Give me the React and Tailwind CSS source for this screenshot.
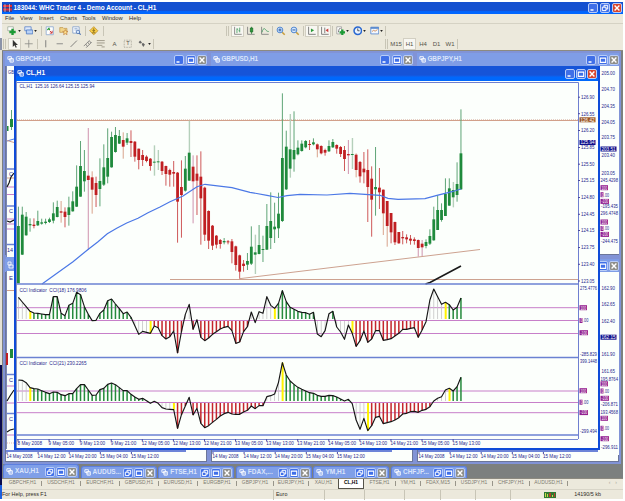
import React from "react";

/* ---------- market data: [high, low, open/close top, open/close bottom, kind] ---------- */
// kinds: g = up, r = down, G / R = up / down with a pale wick
const CANDLES = `350 580 408 580 g;350 495 374 494 g;366 437 380 436 g;385 425 402 406 g;385 415 404 408 r;362 408 393 406 g;386 404 397 401 g;386 403 395 399 g;383 399 388 396 g;337 400 370 392 g;332 382 351 381 g;333 398 364 368 R;352 412 365 381 r;320 407 352 375 g;304 365 334 364 g;226 351 290 350 g;153 320 228 320 g;180 305 243 274 g;114 480 257 270 P;244 371 262 299 R;260 351 279 315 r;205 349 273 297 g;163 288 232 284 g;115 280 204 260 g;125 233 141 232 g;111 188 135 186 g;120 162 138 161 g;127 206 150 170 R;129 165 145 158 g;121 201 153 159 r;153 215 155 200 r;176 238 176 210 r;180 228 195 210 r;196 217 200 213 r;204 242 206 228 r;166 257 215 218 G;180 240 214 217 G;213 255 215 243 r;227 287 228 252 r;236 290 240 254 r;213 290 246 251 r;246 458 248 335 r;211 443 291 315 r;198 305 236 302 g;92 273 188 272 G;196 400 230 274 P;196 375 251 272 r;184 464 260 325 r;290 453 293 434 r;361 477 363 452 r;405 480 407 467 r;435 475 437 464 r;447 476 450 462 r;444 463 453 457 g;450 463 454 457 r;447 520 454 486 r;467 542 469 525 r;494 566 496 545 r;510 545 521 528 r;489 540 513 524 g;409 525 470 521 g;434 552 487 494 G;405 493 465 492 g;437 516 477 480 g;342 480 408 479 g;307 477 393 444 g;338 459 410 418 g;308 444 371 415 g;10 396 204 393 g;122 300 170 298 g;72 263 178 236 G;64 245 180 208 g;151 196 173 193 g;151 185 161 183 g;150 175 153 172 g;150 180 162 165 r;145 166 157 163 g;160 202 163 178 R;166 193 168 190 r;176 197 180 188 r;151 186 168 184 g;147 174 156 172 g;163 191 165 176 r;168 201 171 192 r;168 243 180 207 r;150 252 192 196 P;144 237 192 195 G;190 262 194 240 R;213 278 216 259 r;186 280 236 247 r;178 396 240 291 r;229 440 266 329 r;171 377 291 298 g;234 357 293 307 r;298 435 299 370 R;333 470 333 408 R;369 460 369 427 r;395 465 396 457 r;426 461 426 460 r;423 463 441 445 r;433 460 442 448 r;435 464 446 452 r;442 464 448 453 r;448 500 450 474 P;450 498 461 472 P;448 475 456 468 g;418 465 438 461 g;350 452 388 451 g;317 420 360 420 g;340 395 360 390 g;265 378 312 378 g;265 347 295 347 g;276 352 300 322 G;217 335 282 315 g;58 300 190 298 g`
  .split(";")
  .map((s) => {
    const [h, l, t, b, k] = s.split(" ");
    return { h: 90 + h / 3, l: 90 + l / 3, t: 90 + t / 3, b: 90 + b / 3, k };
  });

const CCI18 = [52,66,80,94,99,100,102,104,104,50,50,100,107,76,70,37,44,80,103,122,121,100,90,62,57,72,86,101,96,112,137,163,154,157,160,138,143,167,177,170,153,219,155,103,73,148,119,172,182,174,163,155,147,142,139,152,190,186,155,140,96,128,95,100,50,76,85,70,32,65,82,88,94,97,98,103,97,162,170,152,101,94,141,156,178,135,160,199,182,153,187,177,152,152,181,179,176,168,160,148,148,145,143,172,150,125,60,27,50,73,67,74,90,82,54];
const CCI21 = [300,301,308,323,326,327,332,337,341,336,337,344,347,341,341,326,314,314,330,346,345,329,325,313,309,314,323,332,332,343,351,358,355,362,370,364,370,383,387,388,389,445,404,378,352,405,385,430,443,437,427,418,408,401,397,402,403,403,396,391,378,386,377,377,350,347,342,307,248,285,303,313,322,328,333,338,340,346,349,349,346,347,351,357,363,358,371,420,448,415,452,437,412,409,431,428,425,420,413,402,400,395,394,397,391,388,380,363,355,350,330,325,333,320,292];

const GREY = "#c4c4c4", YEL = "#fff200", GRN = "#258a3c", RED = "#c4262c";
const cx = (i) => 18.4 + 3.882 * i;
const cy = (v) => 280 + v / 3;
const tone = (i, ranges) => ranges.find((r) => i <= r[0])[1];
const TONES18 = [[2, GREY], [3, YEL], [29, GRN], [33, GREY], [34, YEL], [42, RED], [44, GREY], [59, RED], [65, GREY], [66, YEL], [76, GRN], [80, GREY], [81, GRN], [85, GREY], [86, YEL], [104, RED], [109, GREY], [110, YEL], [114, GRN]];
const TONES21 = [[2, GREY], [3, YEL], [33, GRN], [39, GREY], [40, YEL], [43, RED], [44, GREY], [63, RED], [67, GREY], [68, YEL], [85, GRN], [89, GREY], [90, YEL], [107, RED], [110, GREY], [111, YEL], [114, GRN]];

const MA = "42,284 58,272.5 73,261.7 88,249.5 98,241.7 107.3,233.7 116.7,228.3 126.7,223 138,218.3 148,212.7 160,207 170,201.8 183,196 197,186.7 205,184.3 232,187.7 250,192.3 267,195.3 278,197.5 287,195.7 300,194.3 327,195 350,193.3 380,195.3 388,198.3 398,199.3 425,198.7 437,195.3 452,191.7 461,189";

function Txt({ x, y, w, size = 5.2, fill = "#26268c", children }) {
  return (
    <text x={x} y={y} fontSize={size} fill={fill} textLength={w} lengthAdjust="spacingAndGlyphs">
      {children}
    </text>
  );
}

function Tag({ x, y, w, h = 5, fill, text, tw }) {
  return (
    <g>
      <rect x={x} y={y - h / 2} width={w} height={h} fill={fill} />
      <Txt x={x + 1} y={y + 1.8} w={tw || w - 2} size={4.8} fill="#fff">{text}</Txt>
    </g>
  );
}

function Histogram({ data, tones, zero }) {
  return (
    <g>
      {data.map((v, i) => {
        const y = cy(v);
        const up = y < zero - 1.5;
        if (!up && y < zero + 1.5) return null;
        const c = tone(i, tones);
        return <rect key={i} x={cx(i) - (c === GREY ? 0.4 : 0.75)} width={c === GREY ? 0.8 : c === YEL ? 2 : 1.5}
          y={up ? y : zero + 0.5} height={up ? zero - 1.5 - y : y - zero - 0.5} fill={c} />;
      })}
      <polyline points={data.map((v, i) => `${cx(i)},${cy(v)}`).join(" ")} fill="none" stroke="#161616" strokeWidth="1.15" strokeLinejoin="round" />
    </g>
  );
}

const PRICES = [["126.90", 97.2], ["126.55", 113.7], ["126.20", 130.5], ["125.85", 147.5], ["125.50", 164.2], ["125.15", 180.5], ["124.80", 197.5], ["124.45", 214.3], ["124.15", 230.5], ["123.75", 247.5], ["123.40", 264.3], ["123.05", 281]];
const TIMES = ["8 May 2008", "9 May 05:00", "9 May 13:00", "9 May 21:00", "12 May 05:00", "12 May 13:00", "12 May 21:00", "13 May 05:00", "13 May 13:00", "13 May 21:00", "14 May 05:00", "14 May 13:00", "14 May 21:00", "15 May 05:00", "15 May 13:00"];

function Chart() {
  return (
    <svg width="582" height="367" viewBox="16 81 582 367" className="block" fontFamily="'Liberation Sans', Arial, sans-serif">
      <rect x="16" y="81" width="582" height="367" fill="#fcfffc" />
      <rect x="16" y="81" width="1" height="367" fill="#8a93b8" />
      <path d="M17 82.5H578.5V439" fill="none" stroke="#6f7fd0" strokeWidth="1" />
      <path d="M17 120.5H578" stroke="#d2a08a" />
      <path d="M17 119.5H578" stroke="#e6cfc4" strokeDasharray="1 1" />
      <path d="M170 279.5H578M239.5 278.7L480 249.5" stroke="#cda290" fill="none" />
      {CANDLES.map((c, i) => {
        const x = cx(i);
        const down = "rRP".includes(c.k);
        const wick = { g: "#5fa577", r: "#cf5a5a", G: "#b5d0bb", R: "#d9a38c", P: "#cf93ae" }[c.k];
        return (
          <g key={i}>
            <rect x={x - 0.5} y={c.h} width={c.k === "G" ? 1.4 : 1} height={c.l - c.h} fill={wick} />
            <rect x={Math.max(17, x - 1.4)} y={c.t} width="2.8" height={Math.max(1, c.b - c.t)} fill={down ? "#c01f22" : "#1f8a3c"} />
          </g>
        );
      })}
      <polyline points={MA} fill="none" stroke="#4b78e6" strokeWidth="1.2" />
      <path d="M425.5 284L430 282.5L461 266" stroke="#1a1a1a" strokeWidth="1.6" fill="none" />
      <Txt x={19.5} y={88} w={75}>CL,H1&nbsp; 125.16 126.64 125.15 125.94</Txt>

      <path d="M17 307.7H578M17 320.5H578M17 333.5H578M17 391H578M17 402.5H578M17 412.7H578" stroke="#c77fc9" />
      <Histogram data={CCI18} tones={TONES18} zero={320.5} />
      <Histogram data={CCI21} tones={TONES21} zero={402.5} />
      <Txt x={19.5} y={291.6} w={67}>CCI Indicator&nbsp; CCI(18) 176.9806</Txt>
      <Txt x={19.5} y={364.8} w={67}>CCI Indicator&nbsp; CCI(21) 230.2265</Txt>
      <path d="M17 284H578M17 357.5H578M17 435H578" stroke="#6b82d2" strokeWidth="1.6" />
      <path d="M17 439.5H578" stroke="#7c8bd0" />

      {PRICES.map(([p, y]) => (
        <g key={p}>
          <path d={`M578 ${y}h2`} stroke="#4a4aa0" />
          <Txt x={581} y={y + 1.8} w={13.5}>{p}</Txt>
        </g>
      ))}
      <Tag x={579.5} y={119.8} w={16} fill="#9a5524" text="126.42" />
      <Tag x={579.5} y={142.5} w={16} fill="#10108c" text="125.94" />
      <Txt x={580} y={289.6} w={17}>275.4776</Txt>
      <Tag x={579.5} y={307.7} w={7.5} fill="#93208f" text="100" />
      <Tag x={579.5} y={320.5} w={3} fill="#93208f" text="0" tw={1.6} />
      <Txt x={583} y={322.3} w={5.5}>.00</Txt>
      <Tag x={579.5} y={332.7} w={8.5} fill="#93208f" text="-100" />
      <Txt x={580} y={355.5} w={17}>-285.829</Txt>
      <Txt x={580} y={363.2} w={17}>399.1448</Txt>
      <Tag x={579.5} y={390.7} w={7.5} fill="#93208f" text="100" />
      <Tag x={579.5} y={402.2} w={3} fill="#93208f" text="0" tw={1.6} />
      <Txt x={583} y={404} w={5.5}>.00</Txt>
      <Tag x={579.5} y={412.6} w={8.5} fill="#93208f" text="-100" />
      <Txt x={580} y={433.2} w={17}>-299.494</Txt>
      {TIMES.map((t, i) => (
        <g key={t}>
          <path d={`M${18 + 31.08 * i} 439v2.5`} stroke="#4a4aa0" />
          <Txt x={17.5 + 31.08 * i} y={445.3} w={i === 0 ? 24.5 : i < 4 ? 25.5 : 27.7}>{t}</Txt>
        </g>
      ))}
    </svg>
  );
}

/* ---------- window furniture ---------- */
function WinIcon() {
  return (
    <svg viewBox="0 0 8 8" className="block size-[7px] shrink-0" fill="none" stroke="#fff">
      <path d="M1 .8h4v3H1zM2.8 3h4.4v4H3.6z" strokeWidth="1" />
      <path d="M3.5 5l1.5 1 1.5-2" strokeWidth=".8" />
    </svg>
  );
}

function Btn({ kind, tone: t = "bg-[#3f6fe8]" }) {
  return (
    <span className={`block size-[10px] shrink-0 rounded-[2px] border border-[#b9cdf8] ${t}`}>
      <svg viewBox="0 0 8 8" className="block size-[8px]" fill="none" stroke="#fff" strokeWidth="1.2">
        {kind === "min" && <path d="M1.5 6h3" strokeWidth="1.5" />}
        {kind === "max" && <path d="M1.3 2h5.4v4.4H1.3zM1.3 2.2h5.4" strokeWidth="1.1" />}
        {kind === "restore" && <path d="M3 3V1.3h3.7V5H5M1.3 3.2H5v3.4H1.3z" strokeWidth="1" />}
        {kind === "close" && <path d="M1.6 1.6l4.8 4.8M6.4 1.6L1.6 6.4" strokeWidth="1.4" />}
      </svg>
    </span>
  );
}

function BackTitle({ name, className = "" }) {
  return (
    <div className={`flex h-[13px] shrink-0 items-center gap-[1.500px] bg-[#7f9de6] pl-[2px] ${className}`}>
      <WinIcon />
      <span className="grow text-[6.4px] font-bold leading-none tracking-[-0.1px] text-[#dbe5fb]">{name}</span>
      <Btn kind="min" />
      <Btn kind="max" />
      <Btn kind="close" tone="bg-[#8f8f8a]" />
    </div>
  );
}

const BACK_TIMES = ["14 May 2008", "14 May 12:00", "14 May 20:00", "15 May 04:00", "15 May 12:00"];

function BackWindow({ x, y, h, name, children }) {
  return (
    <div className="absolute flex w-[206px] flex-col border-2 border-[#8193d6] bg-[#7f9de6]" style={{ left: x, top: y, height: h }}>
      <BackTitle name={name} />
      <div className="relative grow overflow-hidden border border-[#6b7699] bg-[#fcfffc]">{children}</div>
    </div>
  );
}

function BackAxis() {
  return (
    <div className="absolute inset-x-0 bottom-0 h-[11px]">
      <div className="h-[2px] w-[180px] bg-[#6d84d8]" />
      <svg width="200" height="9" viewBox="0 0 200 9" className="block" fontFamily="'Liberation Sans', Arial, sans-serif">
        {BACK_TIMES.map((t, i) => (
          <g key={t}>
            <path d={`M${1 + 31.1 * i} 0v2`} stroke="#4a4aa0" />
            <Txt x={0.5 + 31.1 * i} y={6} w={i === 0 ? 26 : 28}>{t}</Txt>
          </g>
        ))}
      </svg>
    </div>
  );
}

function LeftSliver() {
  return (
    <svg width="8" height="383" viewBox="6 66 8 383" className="absolute left-[6px] top-[15px]" fontFamily="'Liberation Sans', Arial, sans-serif">
      <rect x="6" y="66" width="8" height="383" fill="#fcfffc" />
      <path d="M6.5 66v392" stroke="#7a86b4" />
      <Txt x={8} y={74} w={6}>GB</Txt>
      <path d="M11.5 110v20" stroke="#5fa577" /><path d="M10 119h3v8h-3zM7 126h1.5v5H7z" fill="#1f8a3c" />
      <path d="M7 141l7-2" stroke="#4b78e6" /><path d="M7 140.5l7 2M7 178h7" stroke="#d2a08a" />
      <path d="M7 169h7M7 206h7M7 244.5h7" stroke="#6b82d2" strokeWidth="1.5" />
      <path d="M7 187h7M7 194.5h7M7 219h7M7 224h7M7 229h7M7 386h7M7 403h7M7 435h7" stroke="#c77fc9" />
      <path d="M7 187l2-4 2-6 3-4M7 221l3 1 4-2" stroke="#161616" strokeWidth="1.2" fill="none" />
      <Txt x={9} y={176} w={4}>C</Txt><Txt x={9} y={213} w={4}>C</Txt>
      <Txt x={7} y={252} w={6}>14</Txt>
      <rect x="6" y="257" width="8" height="14" fill="#7f9de6" />
      <path d="M8 262h3v3H8zM9 265h4v3H9z" stroke="#fff" fill="none" strokeWidth=".8" />
      <Txt x={9} y={280} w={4}>E</Txt>
      <path d="M7 290.5h7" stroke="#d2a08a" /><path d="M7 353v12" stroke="#c01f22" strokeWidth="2" /><path d="M10 349h3v9h-3z" fill="#1f8a3c" />
      <path d="M7 374.5h7M7 413.5h7" stroke="#6b82d2" strokeWidth="1.5" />
      <path d="M7 401l3-5 4-6M7 432l3-2 4-1" stroke="#161616" strokeWidth="1.2" fill="none" />
      <Txt x={9} y={382} w={4}>C</Txt><Txt x={9} y={421} w={4}>C</Txt>
      <path d="M7 443h7" stroke="#e3b7b2" strokeDasharray="1 1" />
    </svg>
  );
}

const R1 = [["205.00", 73], ["204.70", 88.7], ["204.35", 106.3], ["204.05", 121.7], ["203.75", 137.3], ["203.40", 155], ["203.05", 172.7]];
const R2 = [["162.90", 287.7], ["162.65", 304.3], ["162.40", 320.7], ["161.90", 353.7], ["161.65", 371]];

function RightSliver() {
  const purple = "#93208f";
  return (
    <svg width="20" height="389" viewBox="600 66 20 389" className="absolute left-[600px] top-[15px]" fontFamily="'Liberation Sans', Arial, sans-serif">
      <rect x="600" y="66" width="19" height="188" fill="#fcfffc" />
      <rect x="600" y="272" width="19" height="183" fill="#fcfffc" />
      {[...R1, ...R2].map(([t, y]) => <Txt key={t} x={601.5} y={y + 1.8} w={13.5}>{t}</Txt>)}
      <Tag x={600.5} y={149} w={16} fill="#10108c" text="203.51" />
      <Txt x={600.5} y={182} w={17.5}>245.4298</Txt>
      <Tag x={600.5} y={187.7} w={7.5} fill={purple} text="100" />
      <Tag x={600.5} y={194.7} w={3} fill={purple} text="0" tw={1.6} /><Txt x={604} y={196.5} w={5}>.00</Txt>
      <Tag x={600.5} y={201.4} w={8.5} fill={purple} text="-100" />
      <Txt x={601} y={208} w={17}>-195.435</Txt>
      <Txt x={600.5} y={215} w={17.5}>296.4748</Txt>
      <Tag x={600.5} y={222} w={7.5} fill={purple} text="100" />
      <Tag x={600.5} y={228.5} w={3} fill={purple} text="0" tw={1.6} /><Txt x={604} y={230.3} w={5}>.00</Txt>
      <Tag x={600.5} y={234.4} w={8.5} fill={purple} text="-100" />
      <Txt x={601} y={242.5} w={17}>-244.475</Txt>
      <Tag x={600.5} y={337.2} w={16} fill="#10108c" text="162.15" />
      <Txt x={600.5} y={380.5} w={17.5}>195.8764</Txt>
      <Tag x={600.5} y={383.8} w={7.5} fill={purple} text="100" />
      <Tag x={600.5} y={391} w={3} fill={purple} text="0" tw={1.6} /><Txt x={604} y={392.8} w={5}>.00</Txt>
      <Tag x={600.5} y={398.3} w={8.5} fill={purple} text="-100" />
      <Txt x={601} y={406} w={17}>-206.871</Txt>
      <Txt x={600.5} y={413.8} w={17.5}>193.4568</Txt>
      <Tag x={600.5} y={418.3} w={7.5} fill={purple} text="100" />
      <Tag x={600.5} y={428.3} w={3} fill={purple} text="0" tw={1.6} /><Txt x={604} y={430.1} w={5}>.00</Txt>
      <Tag x={600.5} y={438.7} w={8.5} fill={purple} text="-100" />
      <Txt x={601} y={449} w={17}>-296.911</Txt>
    </svg>
  );
}

/* ---------- toolbars ---------- */
const ICONS = {
  newChart: <><path d="M1 1h7v5H1z" fill="#fff" stroke="#8a9a8a" strokeWidth=".8" /><path d="M7 3.500v8M3 7.500h8" stroke="#1c9a35" strokeWidth="3" /></>,
  profiles: <><path d="M1 1h8v5H1z" fill="#dfe9fa" stroke="#5b84c8" /><path d="M3 5h8v5H3z" fill="#b9d2f6" stroke="#4a78c4" /></>,
  market: <><path d="M1.5 1h9v10h-9z" fill="#fff" stroke="#86a5cf" /><path d="M3 5l2-2 1 2" stroke="#2a9a3a" strokeWidth="1.5" fill="none" /><path d="M6 6l3 3M9 6v3H6" stroke="#cc3a3a" strokeWidth="1.2" fill="none" /></>,
  navigator: <><path d="M1 2h4l1 1h4v5H1z" fill="#f2d58a" stroke="#b98b3c" strokeWidth=".8" /><path d="M8 4.5l1 2.2 2.4.2-1.8 1.6.6 2.5L8 9.7 5.800 11l.6-2.500L4.600 6.900 7 6.700z" fill="#ffe08c" stroke="#b8793a" strokeWidth=".8" /></>,
  terminal: <><path d="M1 1h8v8H1z" fill="#fff" stroke="#7d9cc9" /><path d="M3 3h4M3 5h4" stroke="#86a5cf" /><circle cx="7.500" cy="7.500" r="2.200" fill="#d4e6fa" stroke="#4a70b0" /><path d="M9 9l2 2" stroke="#4a70b0" strokeWidth="1.400" /></>,
  order: <><path d="M6 .8L11.200 6 6 11.200.8 6z" fill="#f7cd46" stroke="#c1902a" /><path d="M6 3v3.600M4.500 5.200L6 7l1.500-1.800M4 8.600h4" stroke="#715716" fill="none" /></>,
  bars: <><path d="M2 1v9.500h9" stroke="#777" fill="none" /><path d="M5 3v6M5 4h1.500M8.500 2v6M7 6h1.500" stroke="#39975a" /></>,
  candles: <><path d="M2 1v9.500h9" stroke="#777" fill="none" /><path d="M7 1v9" stroke="#2e7d3c" /><path d="M5.500 2.500h3v5h-3z" fill="#2a9a3a" stroke="#1d6e2a" /></>,
  line: <><path d="M2 1v9.500h9" stroke="#777" fill="none" /><path d="M2.500 8C4 2 6 3 7 4.500S9 7 11 7" stroke="#39975a" fill="none" /></>,
  zoomIn: <><path d="M7.500 7.500L11 11" stroke="#c79d3d" strokeWidth="2" /><circle cx="5" cy="5" r="3.600" fill="#d4e8fd" stroke="#4b82cc" strokeWidth="1.200" /><path d="M3 5h4M5 3v4" stroke="#2555a4" strokeWidth="1.200" /></>,
  zoomOut: <><path d="M7.500 7.500L11 11" stroke="#c79d3d" strokeWidth="2" /><circle cx="5" cy="5" r="3.600" fill="#d4e8fd" stroke="#4b82cc" strokeWidth="1.200" /><path d="M3 5h4" stroke="#2555a4" strokeWidth="1.200" /></>,
  scroll: <><path d="M2 1v9.500h9" stroke="#666" fill="none" /><path d="M5 3v5l4-2.500z" fill="#2a9a3a" /></>,
  shift: <><path d="M2 1v9.500h9M6 2v7" stroke="#666" fill="none" /><path d="M10.500 3v5L7 5.500z" fill="#cc3a3a" /></>,
  indicators: <><path d="M1 1h6v9H1z" fill="#fff" stroke="#8a8a8a" strokeWidth=".8" /><path d="M3 8c1-6 2-5 3-5" stroke="#555" fill="none" /><path d="M8 4.500v7M4.500 8h7" stroke="#1c9a35" strokeWidth="2.800" /></>,
  clock: <><circle cx="6" cy="6" r="4.700" fill="#e9f3ff" stroke="#2867d0" strokeWidth="1.900" /><path d="M6 3v3h2.300" stroke="#333" fill="none" /></>,
  template: <><path d="M1 1.500h10v8.500H1z" fill="#f3f8ff" stroke="#4f82cb" /><path d="M1 2.500h10" stroke="#4f82cb" strokeWidth="2" /><path d="M2.500 7l2-1.500 2 1 3-2" stroke="#cc7a3a" fill="none" /></>,
  cursor: <path d="M3.500 1v9l2.200-2 1.500 3 1.400-.7L7.200 7.500h2.800z" fill="#333" />,
  cross: <path d="M6 1v10M1 6h10" stroke="#8a8a84" />,
  vline: <path d="M6 1.500v9" stroke="#666" />,
  hline: <path d="M2 6h8" stroke="#777" />,
  trend: <path d="M2 10l8-8" stroke="#666" />,
  channel: <path d="M1 9l7-7M4 11l7-7M3.500 6.500l2 3M6 4l2 3M8 2l2 3" stroke="#777" fill="none" />,
  fibo: <path d="M1 2h10M1 5h10M1 8h7M7 10h4" stroke="#8d8877" />,
  label: <path d="M1.500 1.500h9v9h-9z" stroke="#9a968a" fill="none" strokeDasharray="1 1" />,
  arrows: <><path d="M2 4l2-2 2 2-2 2zM6 7l2-2 2 2-2 3z" fill="#666" /><path d="M5 4l3 3" stroke="#666" /></>,
};

function Tool({ icon, text, w, pressed, drop }) {
  return (
    <span className={`flex h-[12px] shrink-0 items-center justify-center text-[6px] leading-none text-[#55534a] ${w} ${pressed ? "border border-[#d2cfc2] bg-[#f8f7f2]" : ""}`}>
      <span className="relative flex items-center">
        {icon && <svg viewBox="0 0 12 12" className="block size-[9.5px]" fill="none">{ICONS[icon]}</svg>}
        {text && <span className={icon ? "absolute inset-0 flex items-center justify-center text-[5.5px]" : ""}>{text}</span>}
      </span>
      {drop && <svg viewBox="0 0 4 3" className="ml-[1px] h-[2px] w-[3px]"><path d="M0 0h4L2 3z" fill="#222" /></svg>}
    </span>
  );
}

const Sep = ({ className = "" }) => <span className={`h-[10px] w-px shrink-0 bg-[#c8c5b6] ${className}`} />;

const TABS = [["GBPCHF,H1", 38], ["USDCHF,H1", 39], ["EURCHF,H1", 39], ["GBPUSD,H1", 39], ["EURUSD,H1", 39], ["EURGBP,H1", 39], ["GBPJPY,H1", 37], ["EURJPY,H1", 35], ["XAU,H1", 29], ["CL,H1", 26], ["FTSE,H1", 32], ["YM,H1", 25], ["FDAX,M15", 35], ["USDJPY,H1", 37], ["CHFJPY,H1", 37], ["AUDUSD,H1", 38]];
const MINIMIZED = [["XAU,H1", 0], ["AUDUS...", 1], ["FTSE,H1", 1], ["FDAX,...", 1], ["YM,H1", 1], ["CHFJP...", 1]];

export default function App() {
  return (
    <div className="flex h-[501px] w-[625px] overflow-hidden bg-white pt-[2px] font-['Liberation_Sans',Arial,sans-serif]">
      <div className="flex w-[2px] shrink-0 flex-col">
        <div className="h-[36px] bg-[#f4f4f8]" />
        <div className="h-[12px] bg-[#8b93a8]" />
        <div className="h-[315px] bg-[#e4e1d6]" />
        <div className="h-[120px] bg-[#0a0a4c]" />
        <div className="h-[14px] bg-[#1b5fe0]" />
      </div>
      <div className="flex w-[621px] shrink-0 flex-col">
        {/* application title */}
        <div className="flex h-[12px] shrink-0 items-center bg-linear-to-b from-[#1450d0] from-70% to-[#0066ff] to-80% pl-px pr-px">
          <svg viewBox="0 0 9 8" className="block h-[8px] w-[9px]"><path d="M0 0h9v8H0z" fill="#3b3f8c" /><path d="M0 2h9M0 5.500h9" stroke="#e0303a" strokeWidth="2.200" /><path d="M2 0v8M6.500 0v8" stroke="#e6eaf0" strokeWidth=".6" /></svg>
          <span className="ml-[1.500px] grow whitespace-nowrap text-[6.45px] font-bold leading-none text-white">183044: WHC Trader 4 - Demo Account - CL,H1</span>
          <div className="flex gap-[2px]">
            <Btn kind="min" /><Btn kind="restore" /><Btn kind="close" tone="bg-[#d8452c]" />
          </div>
        </div>
        {/* menu */}
        <div className="flex h-[10px] shrink-0 items-center border-b border-[#d5d2c4] bg-[#ece9dc] pl-[3px] text-[5.8px] leading-none text-[#2c2b26]">
          <span className="w-[15px]">File</span><span className="w-[19px]">View</span><span className="w-[21px]">Insert</span>
          <span className="w-[22px]">Charts</span><span className="w-[20px]">Tools</span><span className="w-[27px]">Window</span><span>Help</span>
        </div>
        {/* standard toolbar */}
        <div className="flex h-[14px] shrink-0 items-center bg-[#ece9dc] pl-[4px]">
          <Tool icon="newChart" w="w-[16px]" drop /><Tool icon="profiles" w="w-[17px]" drop />
          <Sep className="ml-[2px] mr-[1px]" />
          <Tool icon="market" w="w-[14px]" /><Tool icon="navigator" w="w-[13px]" /><Tool icon="terminal" w="w-[14px]" />
          <Sep className="mx-px" />
          <Tool icon="order" w="w-[14px]" />
          <Sep className="ml-[2px]" /><Sep className="ml-[122px]" /><Sep className="ml-px mr-[2px]" />
          <Tool icon="bars" w="w-[13px]" pressed /><Tool icon="candles" w="w-[14px]" /><Tool icon="line" w="w-[13px]" />
          <Sep className="mx-px" />
          <Tool icon="zoomIn" w="w-[14px]" /><Tool icon="zoomOut" w="w-[14px]" />
          <Sep className="mx-px" />
          <Tool icon="scroll" w="w-[13px]" pressed /><Tool icon="shift" w="w-[13px]" pressed />
          <Sep className="mx-px" />
          <Tool icon="indicators" w="w-[17px]" drop /><Tool icon="clock" w="w-[17px]" drop /><Tool icon="template" w="w-[17px]" drop />
          <Sep />
        </div>
        {/* drawing and period toolbar */}
        <div className="flex h-[13px] shrink-0 items-center border-b border-[#8c8a80] bg-[#ece9dc] pl-px">
          <Sep /><Sep className="ml-px mr-[2px]" />
          <Tool icon="cursor" w="w-[13px]" pressed /><Tool icon="cross" w="w-[15px]" />
          <Sep className="mx-px" />
          <Tool icon="vline" w="w-[14px]" /><Tool icon="hline" w="w-[14px]" /><Tool icon="trend" w="w-[14px]" />
          <Tool icon="channel" w="w-[13px]" /><Tool icon="fibo" w="w-[14px]" /><Tool text="A" w="w-[13px]" />
          <Tool icon="label" text="T" w="w-[14px]" /><Tool icon="arrows" w="w-[18px]" drop />
          <Sep /><Sep className="ml-[231px]" /><Sep className="ml-px mr-px" />
          <Tool text="M15" w="w-[14px]" /><Tool text="H1" w="w-[13px]" pressed /><Tool text="H4" w="w-[14px]" />
          <Tool text="D1" w="w-[13px]" /><Tool text="W1" w="w-[14px]" /><Sep />
        </div>

        {/* MDI desktop */}
        <div className="relative -ml-[2px] h-[427px] w-[623px] shrink-0">
          <div className="absolute bottom-0 left-[2px] right-0 top-0 overflow-hidden bg-[#7c807f]">
            <div className="absolute -left-[2px] top-0 h-[427px] w-[625px]">
              <BackWindow x={3} y={0} h={206} name="GBPCHF,H1" />
              <BackWindow x={209} y={0} h={206} name="GBPUSD,H1" />
              <BackWindow x={415} y={0} h={206} name="GBPJPY,H1" />
              <BackWindow x={3} y={206} h={207} name="EURUSD,H1"><BackAxis /></BackWindow>
              <BackWindow x={209} y={206} h={207} name="EURGBP,H1"><BackAxis /></BackWindow>
              <BackWindow x={415} y={206} h={207} name="EURJPY,H1"><BackAxis /></BackWindow>
              <LeftSliver />
              <RightSliver />

              {/* active chart window */}
              <div className="absolute left-[14px] top-[15px] flex h-[384px] w-[586px] flex-col border-2 border-t-0 border-[#0f4bd8] bg-[#0f4bd8]">
                <div className="flex h-[15px] shrink-0 items-center gap-[2px] bg-linear-to-b from-[#1654d8] from-60% to-[#0068fc] to-75% pl-px pr-px">
                  <WinIcon />
                  <span className="grow text-[6.6px] font-bold leading-none text-white">CL,H1</span>
                  <div className="flex gap-px"><Btn kind="min" /><Btn kind="max" /><Btn kind="close" tone="bg-[#d8452c]" /></div>
                </div>
                <Chart />
              </div>

              {/* minimised windows */}
              <div className="absolute left-[3px] top-[413px] flex h-[14px] items-end gap-[1.600px]">
                {MINIMIZED.map(([n, low]) => (
                  <div key={n} className={`flex w-[76px] items-center gap-[2px] rounded-t-[3px] border-x border-t border-[#5c7fe0] bg-[#7f9fe8] pl-[2px] pr-px ${low ? "h-[12px]" : "h-[14px]"}`}>
                    <WinIcon />
                    <span className="grow whitespace-nowrap text-[6.5px] font-bold leading-none text-[#dbe5fb]">{n}</span>
                    <div className="flex gap-px"><Btn kind="restore" /><Btn kind="max" /><Btn kind="close" tone="bg-[#8f8f8a]" /></div>
                  </div>
                ))}
              </div>
            </div>
          </div>
        </div>

        {/* chart tabs */}
        <div className="flex h-[11px] shrink-0 items-start border-t border-[#8c8a80] bg-[#ece9dc] pl-[2px] text-[4.9px] leading-none text-[#7d7a70]">
          {TABS.map(([t, w]) => (
            <span key={t} style={{ width: w }}
              className={`flex shrink-0 items-center justify-center ${t === "CL,H1" ? "h-[10px] border border-t-0 border-[#55534a] bg-white font-bold text-black" : "h-[9px]"}`}>
              <span className="grow text-center">{t}</span>
              {t !== "CL,H1" && t !== "XAU,H1" && <span className="h-[5px] w-px shrink-0 bg-[#98958a]" />}
            </span>
          ))}
          <span className="ml-auto mr-[6px] mt-px flex gap-[5px] text-[5px] text-[#aaa799]"><span>‹</span><span>›</span></span>
        </div>
        {/* status bar */}
        <div className="flex h-[10px] shrink-0 items-center border-t border-[#d8d5c8] bg-[#ece9dc] text-[5.4px] leading-none text-[#2c2b26]">
          <span className="w-[271px]">For Help, press F1</span>
          <Sep className="h-[7px]" />
          <span className="w-[50px] pl-[2px]">Euro</span>
          <Sep className="h-[7px]" /><Sep className="ml-[39px] h-[7px]" /><Sep className="ml-[39px] h-[7px]" /><Sep className="ml-[35px] h-[7px]" /><Sep className="ml-[34px] h-[7px]" /><Sep className="ml-[34px] h-[7px]" />
          <span className="ml-[33px] flex h-[6px] w-[12px] items-end gap-px bg-[#2f7a32] p-px">
            <span className="h-[4px] w-px bg-[#c9d94a]" /><span className="h-[3px] w-px bg-[#c9d94a]" /><span className="h-[4px] w-[2px] bg-[#b83c2c]" /><span className="h-[2px] w-px bg-[#c9d94a]" /><span className="h-[4px] w-px bg-[#b83c2c]" />
          </span>
          <span className="ml-auto mr-[22px]">14190/5 kb</span>
        </div>
      </div>
    </div>
  );
}
